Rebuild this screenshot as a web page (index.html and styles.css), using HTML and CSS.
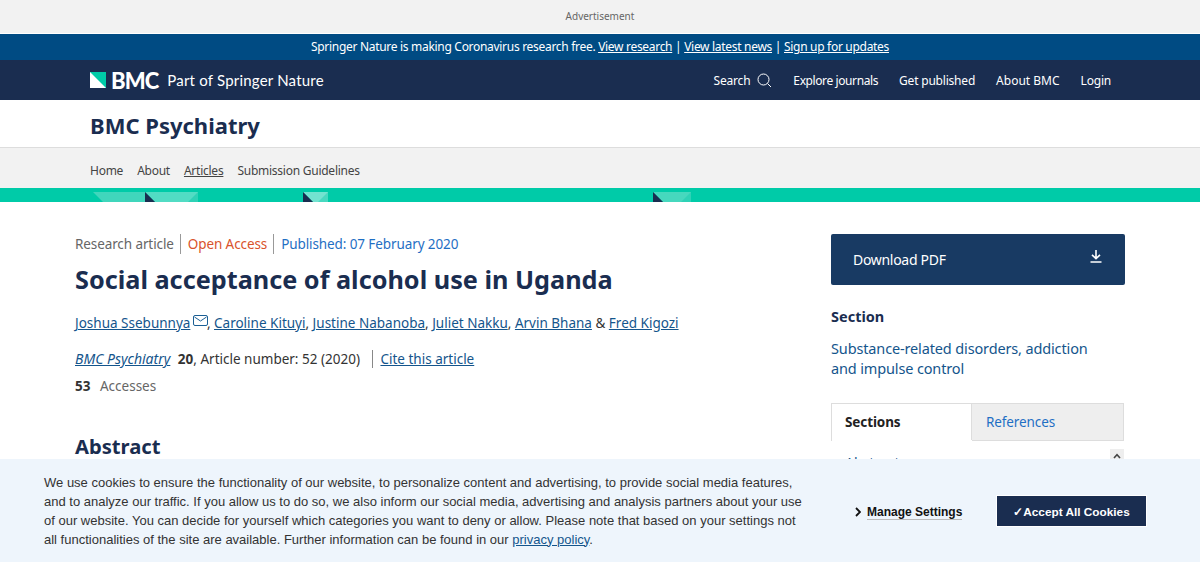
FILE: index.html
```html
<!DOCTYPE html>
<html lang="en">
<head>
    <meta charset="UTF-8">
    <title>Social acceptance of alcohol use in Uganda | BMC Psychiatry</title>
    <link rel="stylesheet" href="styles.css">
</head>
<body>

<div class="ad">Advertisement</div>

<div class="notice">
    Springer Nature is making Coronavirus research free. <a href="#">View research</a> | <a href="#">View latest news</a> | <a href="#">Sign up for updates</a>
</div>

<header class="topbar">
    <div class="brand">
        <svg class="brand-mark" width="16" height="16" viewBox="0 0 16 16">
            <rect width="16" height="16" fill="#fff"/>
            <path d="M0 0H16V16Z" fill="#00cba8"/>
        </svg>
        <span class="brand-name">BMC</span>
        <span class="brand-part">Part of Springer Nature</span>
    </div>
    <nav class="topnav">
        <a href="#" class="search">Search
            <svg width="15" height="15" viewBox="0 0 15 15" fill="none" stroke="#fff" stroke-width="1">
                <circle cx="6.5" cy="6.5" r="5.5"/>
                <path d="M10.5 10.5L14 14"/>
            </svg>
        </a>
        <a href="#" class="explore">Explore journals</a>
        <a href="#">Get published</a>
        <a href="#" class="about">About BMC</a>
        <a href="#">Login</a>
    </nav>
</header>

<div class="journal">BMC Psychiatry</div>

<nav class="subnav">
    <a href="#">Home</a>
    <a href="#">About</a>
    <a href="#" class="current">Articles</a>
    <a href="#">Submission Guidelines</a>
</nav>

<div class="band">
    <svg class="band-art" width="1200" height="14" viewBox="0 0 1200 14">
        <path d="M93 4H145V14H103Z" fill="#40d6bc"/>
        <path d="M145 4H198V14H155Z" fill="#52dcc4"/>
        <path d="M198 4V14H188Z" fill="#2ed2b6"/>
        <path d="M145 4L155 14H145Z" fill="#1a2d50"/>
        <path d="M303 4H328V14H313Z" fill="#72e3d0"/>
        <path d="M328 4V14H318Z" fill="#48d9c0"/>
        <path d="M303 4L313 14H303Z" fill="#1a2d50"/>
        <path d="M653 4H691V14H663Z" fill="#46d8be"/>
        <path d="M691 4V14H681Z" fill="#2ed2b6"/>
        <path d="M653 4L663 14H653Z" fill="#1a2d50"/>
    </svg>
</div>

<main class="page">
    <article class="article">
        <ul class="meta">
            <li>Research article</li>
            <li class="open">Open Access</li>
            <li class="date">Published: 07 February 2020</li>
        </ul>
        <h1>Social acceptance of alcohol use in Uganda</h1>
        <p class="authors">
            <a href="#">Joshua Ssebunnya</a>
            <svg class="mail" width="15" height="11" viewBox="0 0 15 11" fill="none" stroke="#1b5f94" stroke-width="1">
                <rect x="0.5" y="0.5" width="14" height="10" rx="1.5"/>
                <path d="M1.5 2L7.5 6L13.5 2"/>
            </svg>, <a href="#">Caroline Kituyi</a>, <a href="#">Justine Nabanoba</a>, <a href="#">Juliet Nakku</a>, <a href="#">Arvin Bhana</a> &amp; <a href="#">Fred Kigozi</a>
        </p>
        <p class="cite">
            <a href="#"><i>BMC Psychiatry</i></a>
            <b>20</b>, Article number: 52 (2020)
            <a href="#" class="cite-link">Cite this article</a>
        </p>
        <p class="access"><b>53</b> Accesses</p>
        <h2>Abstract</h2>
    </article>

    <aside class="side">
        <a href="#" class="pdf">Download PDF
            <svg width="12" height="13" viewBox="0 0 12 13" fill="none" stroke="#fff" stroke-width="1.6">
                <path d="M6 0V8M2 4.8L6 8.6L10 4.8M.5 12H11.5"/>
            </svg>
        </a>
        <h3>Section</h3>
        <a href="#" class="section-link">Substance-related disorders, addiction and impulse control</a>
        <div class="tabs">
            <div class="tab active">Sections</div>
            <div class="tab">References</div>
        </div>
        <div class="tab-body">
            <a href="#">Abstract</a>
            <div class="scroll-up">
                <svg width="8" height="6" viewBox="0 0 8 6" fill="none" stroke="#444" stroke-width="1.6">
                    <path d="M1 5L4 1.6L7 5"/>
                </svg>
            </div>
        </div>
    </aside>
</main>

<div class="cookies">
    <p>We use cookies to ensure the functionality of our website, to personalize content and advertising, to provide social media features, and to analyze our traffic. If you allow us to do so, we also inform our social media, advertising and analysis partners about your use of our website. You can decide for yourself which categories you want to deny or allow. Please note that based on your settings not all functionalities of the site are available. Further information can be found in our <a href="#">privacy policy</a>.</p>
    <a href="#" class="manage">
        <svg width="6" height="10" viewBox="0 0 6 10" fill="none" stroke="#111" stroke-width="1.8">
            <path d="M1 1L5 5L1 9"/>
        </svg>
        <span>Manage Settings</span>
    </a>
    <button class="accept">✓Accept All Cookies</button>
</div>

</body>
</html>
```

FILE: styles.css
```css
html, body {
    height: 562px;
    overflow: hidden;
}
body {
    margin: 0;
    font-family: "Noto Sans", "Open Sans", sans-serif;
    font-size: 14px;
    color: #333;
    background: #fff;
}
a { color: inherit; }

.ad {
    height: 33px;
    line-height: 32px;
    background: #f2f2f2;
    border-bottom: 1px solid #fff;
    text-align: center;
    font-size: 10px;
    color: #666;
}
.notice {
    height: 26px;
    line-height: 26px;
    background: #004b83;
    color: #fff;
    text-align: center;
    font-size: 12px;
    letter-spacing: -.3px;
}
.topbar {
    display: flex;
    justify-content: space-between;
    align-items: center;
    height: 40px;
    padding: 0 89px 0 90px;
    background: #1a2d50;
    color: #fff;
}
.brand {
    display: flex;
    align-items: center;
}
.brand-mark { margin-right: 5px; }
.brand-name {
    font-family: Lato, sans-serif;
    font-weight: 900;
    font-size: 22px;
    letter-spacing: -.9px;
    margin-right: 9px;
}
.brand-part {
    font-family: Lato, sans-serif;
    font-size: 15px;
    letter-spacing: .2px;
}
.topnav {
    display: flex;
    gap: 21px;
    font-size: 12px;
    letter-spacing: -.2px;
}
.topnav a { text-decoration: none; }
.topnav .explore { letter-spacing: -.4px; }
.topnav .about { letter-spacing: 0; }
.search {
    display: flex;
    align-items: center;
    gap: 7px;
}
.journal {
    height: 47px;
    line-height: 50px;
    padding-left: 90px;
    font-size: 22px;
    font-weight: 700;
    color: #1a2d50;
}
.subnav {
    display: flex;
    gap: 14px;
    align-items: center;
    height: 41px;
    padding: 4px 0 0 90px;
    box-sizing: border-box;
    background: #f2f2f2;
    border-top: 1px solid #ddd;
    font-size: 12px;
    letter-spacing: -.25px;
    color: #444;
}
.subnav a { text-decoration: none; }
.subnav a.current { text-decoration: underline; }
.band {
    height: 14px;
    background: #00cba8;
}
.band-art { display: block; }

.page {
    display: flex;
    justify-content: space-between;
    padding: 32px 75px 0;
}
.article { width: 680px; }
.meta {
    display: flex;
    align-items: center;
    list-style: none;
    margin: 0;
    padding: 0;
    font-size: 13.5px;
    letter-spacing: -.1px;
    line-height: 20px;
    color: #666;
}
.meta li + li {
    margin-left: 6px;
    padding-left: 7px;
    border-left: 1px solid #999;
}
.meta .open { color: #d9532c; }
.meta .date { color: #1f6fc4; }
h1 {
    margin: 7px 0 0;
    font-size: 25.25px;
    line-height: 36px;
    font-weight: 700;
    color: #1a2d50;
}
.authors {
    margin: 16px 0 0;
    font-size: 13.5px;
    line-height: 20px;
}
.authors a, .cite a { color: #14558c; }
.mail {
    margin: 0 -1px;
    vertical-align: 2px;
}
.cite {
    margin: 16px 0 0;
    font-size: 13.5px;
    line-height: 20px;
}
.cite i { font-size: 14px; }
.cite b { margin-left: 4px; }
.cite-link {
    margin-left: 9px;
    padding-left: 7px;
    border-left: 1px solid #888;
    text-decoration-skip-ink: none;
}
.access {
    margin: 7px 0 0;
    font-size: 13.5px;
    line-height: 20px;
    color: #666;
}
.access b {
    color: #333;
    margin-right: 6px;
}
h2 {
    margin: 36px 0 0;
    font-size: 20.2px;
    line-height: 28px;
    font-weight: 700;
    color: #1a2d50;
}

.side { width: 294px; }
.pdf {
    display: flex;
    justify-content: space-between;
    align-items: center;
    height: 51px;
    padding: 0 23px 0 22px;
    box-sizing: border-box;
    background: #183a63;
    border-radius: 2px;
    color: #fff;
    font-size: 14px;
    letter-spacing: -.3px;
    text-decoration: none;
}
.pdf svg { margin-bottom: 7px; }
.side h3 {
    margin: 21px 0 0;
    font-size: 14.5px;
    line-height: 20px;
    font-weight: 700;
    color: #1a2d50;
}
.section-link {
    display: block;
    max-width: 272px;
    margin-top: 12px;
    font-size: 14.5px;
    letter-spacing: -.14px;
    line-height: 20px;
    color: #14558c;
    text-decoration: none;
}
.tabs {
    display: flex;
    width: 293px;
    margin-top: 25px;
    border: 1px solid #ddd;
    border-bottom: 0;
    box-sizing: border-box;
}
.tab {
    height: 36px;
    line-height: 36px;
    padding-left: 14px;
    font-size: 13.5px;
    letter-spacing: -.1px;
    color: #1f6fc4;
    background: #eee;
    border-bottom: 1px solid #ddd;
    flex: 1;
}
.tab.active {
    flex: 0 0 140px;
    box-sizing: border-box;
    padding-left: 13px;
    font-weight: 700;
    color: #222;
    background: #fff;
    border-right: 1px solid #ddd;
    border-bottom: 0;
}
.tab-body {
    position: relative;
    padding: 12px 14px;
    font-size: 14px;
    color: #14558c;
}
.tab-body a { text-decoration: none; }
.scroll-up {
    position: absolute;
    top: 8px;
    right: 1px;
    width: 14px;
    height: 30px;
    padding-top: 4px;
    box-sizing: border-box;
    text-align: center;
    background: #eee;
}
.scroll-up svg { display: block; margin: 0 auto; }

.cookies {
    position: fixed;
    left: 0;
    right: 0;
    bottom: 0;
    height: 103px;
    box-sizing: border-box;
    display: flex;
    align-items: center;
    padding: 0 53px 0 44px;
    background: #eef5fc;
    font-family: "Liberation Sans", Arial, sans-serif;
}
.cookies p {
    width: 765px;
    margin: 0;
    font-size: 13px;
    line-height: 19px;
    color: #333;
}
.cookies p a { color: #14558c; }
.manage {
    display: flex;
    align-items: center;
    gap: 6px;
    margin: 3px 0 0 46px;
    font-size: 12px;
    font-weight: 700;
    color: #111;
    text-decoration: none;
}
.manage span { border-bottom: 1px solid #bbb; }
.accept {
    margin-left: auto;
    width: 151px;
    height: 32px;
    padding: 2px 0 0;
    border: 1px solid #fff;
    border-radius: 0;
    background: #1a2d50;
    color: #fff;
    font: 700 11.8px "Liberation Sans", Arial, sans-serif;
}
```
